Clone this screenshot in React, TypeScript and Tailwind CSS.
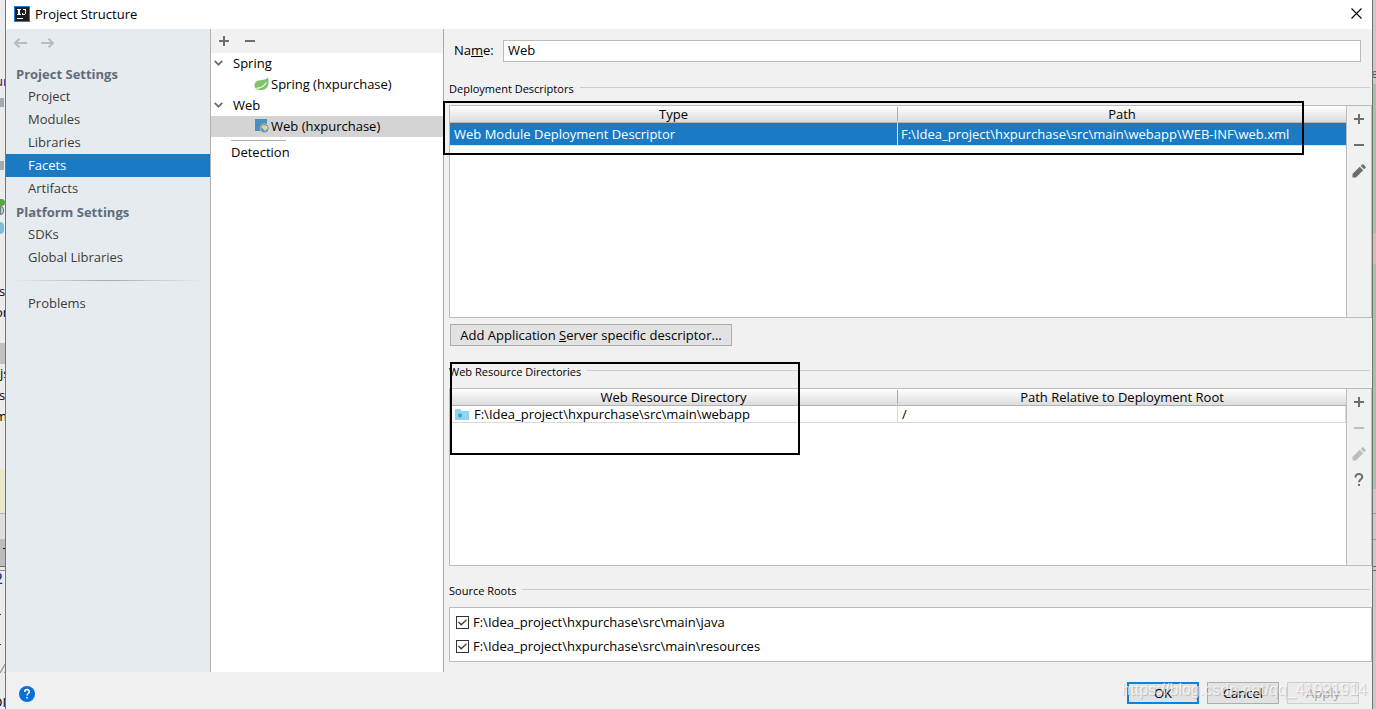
import { useState } from "react";
import type { ReactNode } from "react";

type Strip = { id: string; className: string; text?: string };

const SETTINGS = [
  { title: "Project Settings", items: ["Project", "Modules", "Libraries", "Facets", "Artifacts"] },
  { title: "Platform Settings", items: ["SDKs", "Global Libraries"] },
];

const SOURCE_ROOTS = [
  "F:\\Idea_project\\hxpurchase\\src\\main\\java",
  "F:\\Idea_project\\hxpurchase\\src\\main\\resources",
];

// slices of the editor window that show on both sides of the dialog
const LEFT_STRIPS: Strip[] = [
  { id: "l1", className: "h-[72px]" },
  { id: "l2", className: "h-[18px] -ml-[5px] text-[#1a1a7a]", text: "ur" },
  { id: "l3", className: "h-[8px]" },
  { id: "l4", className: "h-[9px] w-[4px] bg-[#a0abb2]" },
  { id: "l5", className: "h-[54px]" },
  { id: "l6", className: "h-[9px] w-[4px] bg-[#a0abb2]" },
  { id: "l7", className: "h-[29px]" },
  { id: "l8", className: "h-[7px] rounded-r-full bg-[#59a640]" },
  { id: "l9", className: "h-[9px] w-[4px] rounded-r-full border border-[#6f7f88] bg-[#b6cdd8]" },
  { id: "l10", className: "h-[7px]" },
  { id: "l11", className: "h-[12px] w-[4px] rounded-r-full bg-[#7cbfdc]" },
  { id: "l12", className: "h-[48px]" },
  { id: "l13", className: "h-[21px] -ml-px", text: "s" },
  { id: "l14", className: "h-[21px] -ml-[5px]", text: "or" },
  { id: "l15", className: "h-[19px]" },
  { id: "l16", className: "h-[21px] bg-[#c1c1c1]" },
  { id: "l17", className: "h-[22px]", text: "js" },
  { id: "l18", className: "h-[21px] -ml-px", text: "s" },
  { id: "l19", className: "h-[20px] -ml-[5px]", text: "m" },
  { id: "l20", className: "h-[42px]" },
  { id: "l21", className: "h-[45px] border-b border-[#b5b5b5] bg-[#e9e8cb]" },
  { id: "l22", className: "h-[25px] bg-[#dedede]" },
  { id: "l23", className: "h-[28px] border-b border-[#6d6d6d] bg-[#bcbcbc] pl-[3px] leading-[27px]", text: "T" },
  { id: "l24", className: "h-[3px] bg-[#e8e8e8]" },
  { id: "l25", className: "h-[18px] border-t border-[#8a8a8a] font-serif text-base leading-4 text-[#23238e] -ml-[5px]", text: "2" },
  { id: "l26", className: "h-[26px]" },
  { id: "l27", className: "h-px w-px bg-[#23238e]" },
  { id: "l28", className: "h-[29px]" },
  { id: "l29", className: "h-px w-px bg-[#23238e]" },
  { id: "l30", className: "h-[14px]" },
  { id: "l31", className: "h-[18px] italic text-[#808080]", text: "//" },
  { id: "l32", className: "h-[16px]" },
  { id: "l33", className: "h-[16px] -ml-[7px]", text: "DI" },
];

const RIGHT_STRIPS: Strip[] = [
  { id: "r1", className: "h-[64px]" },
  { id: "r2", className: "h-[20px] -ml-[2px] text-[#1a7a2a]", text: "e" },
  { id: "r3", className: "h-[149px] bg-[#9fc5a9]" },
  { id: "r4", className: "h-[31px] bg-[#cdc0ae]" },
  { id: "r5", className: "h-[225px] bg-[#9fc5a9]" },
  { id: "r6", className: "h-[25px] border-b border-[#9a9a9a]" },
  { id: "r7", className: "h-[26px] border-b border-[#9a9a9a]" },
  { id: "r8", className: "h-[27px] border-b border-[#6d6d6d]" },
  { id: "r9", className: "h-[4px] border-b border-[#6d6d6d]" },
];

function EditorEdge({ strips }: { strips: Strip[] }) {
  return (
    <div aria-hidden="true" className="h-full overflow-hidden text-[13px] leading-[18px]">
      {strips.map((s) => (
        <div key={s.id} className={s.className}>
          {s.text}
        </div>
      ))}
    </div>
  );
}

function PlusIcon() {
  return (
    <svg width="10" height="10" viewBox="0 0 10 10" shapeRendering="crispEdges">
      <path d="M4 0h2v4h4v2H6v4H4V6H0V4h4z" fill="currentColor" />
    </svg>
  );
}

function MinusIcon() {
  return (
    <svg width="10" height="10" viewBox="0 0 10 10" shapeRendering="crispEdges">
      <path d="M0 4h10v2H0z" fill="currentColor" />
    </svg>
  );
}

function PencilIcon() {
  return (
    <svg width="14" height="14" viewBox="0 0 14 14" fill="currentColor">
      <path d="M0.500 13.500v-3.500L7.700 2.800l3.500 3.500-7.200 7.200zM8.700 1.900l1.300-1.300q.8-.7 1.600 0l1.800 1.800q.7.800 0 1.600L12.100 5.300z" />
    </svg>
  );
}

function QuestionIcon() {
  return (
    <svg width="10" height="14" viewBox="0 0 10 14" fill="none" stroke="currentColor" strokeWidth="2">
      <path d="M1.500 4.500V4A3.300 3 0 0 1 8.300 4C8.300 6.300 5 6.300 5 9.300" />
      <path d="M5 11v2" />
    </svg>
  );
}

function ChevronIcon() {
  return (
    <svg width="9" height="6" viewBox="0 0 9 6" fill="none" stroke="#6e6e6e" strokeWidth="1.800">
      <path d="M0.700 0.900l3.800 3.800 3.800-3.800" />
    </svg>
  );
}

function ArrowIcon({ right }: { right?: boolean }) {
  return (
    <svg width="13" height="10" viewBox="0 0 13 10" fill="none" stroke="#b9bcbe" strokeWidth="2">
      <path d={right ? "M0 5h12M7.500.7L12 5 7.500 9.300" : "M13 5H1M5.500.7L1 5l4.500 4.300"} />
    </svg>
  );
}

function SpringIcon() {
  return (
    <svg width="15" height="14" viewBox="0 0 15 14">
      <path d="M14 .5c1 4 .7 8-1.500 10.500C10 13.700 5 13.500 2.300 12 .2 10.300-.3 7 2 4.800 4.500 2.300 11 4 14 .5z" fill="#7fc468" />
      <path d="M2.500 11.300C7 11 10.500 9 12.300 5.500" stroke="#fff" strokeWidth="1.200" fill="none" />
    </svg>
  );
}

function WebFacetIcon() {
  return (
    <svg width="15" height="14" viewBox="0 0 15 14">
      <path d="M1 0h12v12H1z" fill="#4a90b8" />
      <circle cx="10.500" cy="9.300" r="4.700" fill="#d4d4d4" />
      <circle cx="10.500" cy="9.300" r="4.200" fill="#5d98cf" />
      <path d="M7.300 7.500l2.400-1.600 3.500 1 .9 2.500-1.800.9-.9 2.200-1.400-1.700L8.100 9z" fill="#f6d277" />
    </svg>
  );
}

function FolderIcon() {
  return (
    <svg width="14" height="11" viewBox="0 0 14 11">
      <path d="M0 0h5l2 2h7v9H0z" fill="#8fd3ee" />
      <circle cx="5" cy="6.500" r="2" fill="#2ba5d8" />
    </svg>
  );
}

function IconButton({ label, disabled, children }: { label: string; disabled?: boolean; children: ReactNode }) {
  return (
    <button
      aria-label={label}
      disabled={disabled}
      className="flex h-[26px] w-[26px] shrink-0 items-center justify-center text-[#6e6e6e] disabled:text-[#bdbdbd]"
    >
      {children}
    </button>
  );
}

function SectionTitle({ children }: { children: ReactNode }) {
  return (
    <div className="flex h-4 items-center gap-1.5 pr-0.5">
      <h2 className="text-[11px] leading-4">{children}</h2>
      <div className="-mt-1 h-px flex-1 bg-[#cdcdcd]" />
    </div>
  );
}

function HeadCell({ last, children }: { last?: boolean; children: ReactNode }) {
  return (
    <th className="h-[17px] border-b border-[#b4b4b4] bg-linear-to-b from-white to-[#dcdcdc] p-0 font-normal">
      <div className={last ? "h-[14px] leading-[14px]" : "h-[14px] border-r border-[#ababab] leading-[14px]"}>
        {children}
      </div>
    </th>
  );
}

function TreeGroup({ label }: { label: string }) {
  return (
    <button className="flex h-[21px] w-full items-center gap-[10px] pb-0.5 pl-[3px]">
      <ChevronIcon />
      {label}
    </button>
  );
}

export default function App() {
  const [section, setSection] = useState("Facets");
  const [name, setName] = useState("Web");
  const [roots, setRoots] = useState([true, true]);

  function toggleRoot(index: number) {
    setRoots(roots.map((on, i) => (i === index ? !on : on)));
  }

  return (
    <div className="flex h-screen bg-[#c9c9c9] font-['Open_Sans','Noto_Sans_CJK_SC',sans-serif] text-[13px] leading-4 text-black">
      <div className="w-[5px] bg-[#ececec]">
        <EditorEdge strips={LEFT_STRIPS} />
      </div>

      <div className="flex min-w-0 flex-1 flex-col border-x border-[#757575] bg-[#f1f1f1]">
        <header className="flex h-[29px] shrink-0 items-center bg-white pr-[10px] pb-[2px] pl-2">
          <svg width="16" height="16" viewBox="0 0 16 16" shapeRendering="crispEdges">
            <path d="M0 0h16v16H0z" fill="#1a7de0" />
            <path d="M1 1h14v14H1z" fill="#1f1f1f" />
            <path
              d="M3 3h4v1H6v4h1v1H3V8h1V4H3zM9 3h3v5h-1v1H8V7h1v1h2V4H9zM3 12h6v1H3z"
              fill="#fff"
            />
          </svg>
          <h1 className="ml-[5px] flex-1">Project Structure</h1>
          <button aria-label="Close">
            <svg width="11" height="11" viewBox="0 0 11 11" stroke="#000" strokeWidth="1.100">
              <path d="M.5.5l10 10M10.500.5l-10 10" />
            </svg>
          </button>
        </header>

        <div className="flex min-h-0 flex-1">
          <nav className="w-[205px] shrink-0 border-r border-[#b0b0b0] bg-[#e6ebef] text-[#3c3c3c]">
            <div className="flex h-[33px] gap-[14px] pt-[9px] pl-2">
              <button aria-label="Back" className="h-[10px]">
                <ArrowIcon />
              </button>
              <button aria-label="Forward" className="h-[10px]">
                <ArrowIcon right />
              </button>
            </div>
            {SETTINGS.map((group) => (
              <div key={group.title}>
                <h2 className="pt-0.5 pl-[10px] leading-[21px] font-bold text-[#5f6d7b]">{group.title}</h2>
                {group.items.map((item) => (
                  <button
                    key={item}
                    onClick={() => setSection(item)}
                    className={
                      item === section
                        ? "block h-[23px] w-full bg-[#1a7bc4] pb-0.5 pl-[22px] text-left text-white"
                        : "block h-[23px] w-full pb-0.5 pl-[22px] text-left"
                    }
                  >
                    {item}
                  </button>
                ))}
              </div>
            ))}
            <div className="flex h-[23px] items-center px-2">
              <div className="h-px flex-1 bg-linear-to-r from-transparent via-[#a8a8a8] to-transparent" />
            </div>
            <button className="block h-[23px] w-full pb-0.5 pl-[22px] text-left">Problems</button>
          </nav>

          <aside className="w-[233px] shrink-0 border-r border-[#a8a8a8] bg-white">
            <div className="flex h-6 items-center bg-[#f1f1f1]">
              <IconButton label="Add facet">
                <PlusIcon />
              </IconButton>
              <IconButton label="Remove facet">
                <MinusIcon />
              </IconButton>
            </div>
            <TreeGroup label="Spring" />
            <button className="flex h-[21px] w-full items-center gap-0.5 pb-0.5 pl-[43px]">
              <SpringIcon />
              Spring (hxpurchase)
            </button>
            <TreeGroup label="Web" />
            <button className="flex h-[21px] w-full items-center gap-0.5 bg-[#d4d4d4] pb-0.5 pl-[43px]">
              <WebFacetIcon />
              Web (hxpurchase)
            </button>
            <div className="mt-[3px] ml-5 h-px w-[55px] bg-[#b4b4b4]" />
            <button className="flex h-[23px] w-full items-center pb-0.5 pl-5">Detection</button>
          </aside>

          <main className="flex min-w-0 flex-1 flex-col pt-[11px] pb-[10px] pl-[5px]">
            <div className="flex h-[22px] items-center gap-[10px] pr-[11px] pl-[5px]">
              <label htmlFor="facet-name" className="w-[39px] pb-0.5">
                Na<span className="underline">m</span>e:
              </label>
              <input
                id="facet-name"
                value={name}
                onChange={(e) => setName(e.target.value)}
                className="h-[22px] min-w-0 flex-1 border border-[#bcbcbc] bg-white px-1 pb-0.5"
              />
            </div>

            <section className="mt-[19px] flex min-h-0 flex-20 flex-col">
              <SectionTitle>Deployment Descriptors</SectionTitle>
              <div className="relative mt-2 flex min-h-0 flex-1 border border-[#bcbcbc]">
                <div className="min-w-0 flex-1 bg-white">
                  <table className="w-full table-fixed border-separate border-spacing-0">
                    <thead>
                      <tr>
                        <HeadCell>Type</HeadCell>
                        <HeadCell last>Path</HeadCell>
                      </tr>
                    </thead>
                    <tbody>
                      <tr className="bg-[#1a7bc4] text-white">
                        <td className="h-[23px] truncate border-r border-b border-[#d8e4ee] px-1 py-0">
                          Web Module Deployment Descriptor
                        </td>
                        <td className="h-[23px] truncate border-b border-[#d8e4ee] px-[3px] py-0">
                          F:\Idea_project\hxpurchase\src\main\webapp\WEB-INF\web.xml
                        </td>
                      </tr>
                    </tbody>
                  </table>
                </div>
                <div className="flex w-[25px] flex-col items-center border-l border-[#bcbcbc]">
                  <IconButton label="Add descriptor">
                    <PlusIcon />
                  </IconButton>
                  <IconButton label="Remove descriptor">
                    <MinusIcon />
                  </IconButton>
                  <IconButton label="Edit descriptor">
                    <PencilIcon />
                  </IconButton>
                </div>
                <div className="pointer-events-none absolute -top-[5px] right-[67px] -left-[7px] h-[54px] border-2 border-black" />
              </div>
            </section>

            <button className="mt-[6px] ml-px h-[22px] w-[282px] shrink-0 border border-[#adadad] bg-[#e2e2e2] leading-5">
              Add Application <span className="underline">S</span>erver specific descriptor...
            </button>

            <section className="mt-[18px] flex min-h-0 flex-17 flex-col">
              <SectionTitle>Web Resource Directories</SectionTitle>
              <div className="relative mt-2 flex min-h-0 flex-1 border border-[#bcbcbc]">
                <div className="min-w-0 flex-1 bg-white">
                  <table className="w-full table-fixed border-separate border-spacing-0">
                    <thead>
                      <tr>
                        <HeadCell>Web Resource Directory</HeadCell>
                        <HeadCell last>Path Relative to Deployment Root</HeadCell>
                      </tr>
                    </thead>
                    <tbody>
                      <tr>
                        <td className="h-[17px] border-r border-b border-[#dadada] px-[5px] py-0">
                          <div className="flex items-center gap-[5px]">
                            <FolderIcon />
                            F:\Idea_project\hxpurchase\src\main\webapp
                          </div>
                        </td>
                        <td className="h-[17px] border-r border-b border-[#dadada] px-1 py-0">/</td>
                      </tr>
                    </tbody>
                  </table>
                </div>
                <div className="flex w-[25px] flex-col items-center border-l border-[#bcbcbc]">
                  <IconButton label="Add directory">
                    <PlusIcon />
                  </IconButton>
                  <IconButton label="Remove directory" disabled>
                    <MinusIcon />
                  </IconButton>
                  <IconButton label="Edit directory" disabled>
                    <PencilIcon />
                  </IconButton>
                  <IconButton label="Directory help">
                    <QuestionIcon />
                  </IconButton>
                </div>
                <div className="pointer-events-none absolute -top-[27px] left-0 h-[93px] w-[350px] border-2 border-black" />
              </div>
            </section>

            <section className="mt-[17px] shrink-0">
              <SectionTitle>Source Roots</SectionTitle>
              <div className="mt-2 border border-[#bcbcbc] bg-white px-[6px] pt-[2px] pb-[3px]">
                {SOURCE_ROOTS.map((root, i) => (
                  <label key={root} className="flex h-6 items-center gap-1">
                    <span className="grid size-[13px] place-items-center">
                      <input
                        type="checkbox"
                        checked={roots[i]}
                        onChange={() => toggleRoot(i)}
                        className="peer col-start-1 row-start-1 size-[13px] appearance-none border border-[#333] bg-white"
                      />
                      <svg
                        width="9"
                        height="7"
                        viewBox="0 0 9 7"
                        fill="none"
                        stroke="#333"
                        strokeWidth="1.300"
                        className="pointer-events-none invisible col-start-1 row-start-1 peer-checked:visible"
                      >
                        <path d="M.5 3l2.800 2.800L8.500.6" />
                      </svg>
                    </span>
                    {root}
                  </label>
                ))}
              </div>
            </section>
          </main>
        </div>

        <footer className="relative flex h-[37px] shrink-0 items-start bg-[#f0f0f0] pt-[10px] pr-[13px] pl-[13px]">
          <button aria-label="Help" className="mt-1 size-4">
            <svg width="16" height="16" viewBox="0 0 16 16" fill="none">
              <circle cx="8" cy="8" r="8" fill="#0a6fd6" />
              <path d="M5.700 6C5.700 2.800 10.300 2.900 10.300 5.700 10.300 7.400 8 7.600 8 9.600M8 11v1.600" stroke="#fff" strokeWidth="1.500" />
            </svg>
          </button>
          <div className="ml-auto flex gap-2">
            <button className="h-[22px] w-[72px] border-2 border-[#0a84e0] bg-[#e2e2e2] leading-[18px]">OK</button>
            <button className="h-[22px] w-[72px] border border-[#adadad] bg-[#e2e2e2] leading-5">Cancel</button>
            <button
              disabled
              className="h-[22px] w-[72px] border border-[#cfcfcf] bg-[#ebebeb] leading-5 text-[#a8a8a8]"
            >
              Apply
            </button>
          </div>
          <span className="pointer-events-none absolute top-2 right-[5px] font-['Liberation_Sans',sans-serif] text-base leading-5 text-white/70 [text-shadow:1px_1px_1px_#0000002e]">
            https://blog.csdn.net/qq_41921914
          </span>
        </footer>
      </div>

      <div className="w-[3px]">
        <EditorEdge strips={RIGHT_STRIPS} />
      </div>
    </div>
  );
}
